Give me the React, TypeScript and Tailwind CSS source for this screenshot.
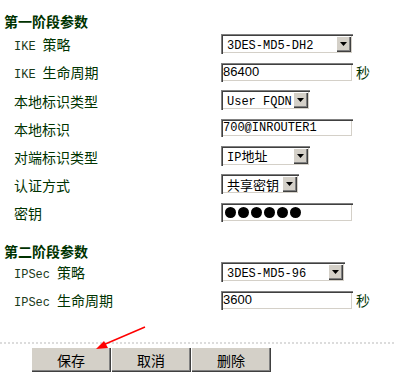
import React from "react";

const green = "text-[#003300]";
const cjk = "font-['Noto_Sans_CJK_SC',sans-serif]";
const mono = "font-['Liberation_Mono','Noto_Sans_CJK_SC',monospace]";
const sunken =
  "bg-white shadow-[inset_1px_1px_#808080,inset_2px_2px_#404040,inset_-1px_-1px_#ffffff,inset_-2px_-2px_#d4d0c8]";

const Label = ({ en, zh }: { en?: string; zh: string }) => (
  <div className={`w-[221px] pl-[14px] leading-[18px] pt-[2px] ${green}`}>
    {en && <span className={`${mono} text-[12px] mr-[7px] text-[#1a3a1a]`}>{en}</span>}
    <span className={`${cjk} text-[14px]`}>{zh}</span>
  </div>
);

const Select = ({ width, children }: { width: string; children: React.ReactNode }) => (
  <div className={`${width} h-[20px] ${sunken} flex items-center justify-between pl-[6px] pr-[2px]`}>
    <div className="text-black leading-[16px]">{children}</div>
    <div className="w-[15px] h-[16px] bg-[#d4d0c8] shadow-[inset_1px_1px_#ffffff,inset_-1px_-1px_#404040,inset_-2px_-2px_#808080] flex items-center justify-center">
      <svg width="7" height="4" viewBox="0 0 7 4">
        <path d="M0 0h7L3.5 4z" fill="#000" />
      </svg>
    </div>
  </div>
);

const TextBox = ({ value, height = "h-[19px]", serif }: { value: string; height?: string; serif?: boolean }) => (
  <div
    className={`w-[132px] ${height} ${sunken} flex items-center pl-[2px] text-black ${
      serif ? `${mono} text-[12px]` : "font-['Liberation_Sans',sans-serif] text-[13px]"
    }`}
  >
    {value}
  </div>
);

const Sec = () => <span className={`${cjk} text-[14px] ml-[3px] ${green}`}>秒</span>;

const Row = ({ children }: { children: React.ReactNode }) => (
  <div className="h-[28px] flex items-center">{children}</div>
);

export default function App() {
  return (
    <div className="relative w-[394px] h-[375px] overflow-hidden bg-white">
      <div className={`h-[30px] pt-[13px] pl-[4px] ${cjk} font-bold text-[14px] leading-[16px] ${green}`}>
        第一阶段参数
      </div>

      <Row>
        <Label en="IKE" zh="策略" />
        <Select width="w-[132px]">
          <span className={`${mono} text-[12px]`}>3DES-MD5-DH2</span>
        </Select>
      </Row>
      <Row>
        <Label en="IKE" zh="生命周期" />
        <TextBox value="86400" />
        <Sec />
      </Row>
      <Row>
        <Label zh="本地标识类型" />
        <Select width="w-[89px]">
          <span className={`${mono} text-[12px]`}>User FQDN</span>
        </Select>
      </Row>
      <Row>
        <Label zh="本地标识" />
        <TextBox value="700@INROUTER1" height="h-[18px]" serif />
      </Row>
      <Row>
        <Label zh="对端标识类型" />
        <Select width="w-[89px]">
          <span className={`${mono} text-[12px]`}>IP</span>
          <span className={`${cjk} text-[13px]`}>地址</span>
        </Select>
      </Row>
      <Row>
        <Label zh="认证方式" />
        <Select width="w-[78px]">
          <span className={`${cjk} text-[13px]`}>共享密钥</span>
        </Select>
      </Row>
      <Row>
        <Label zh="密钥" />
        <div className={`w-[132px] h-[19px] ${sunken} flex items-center gap-[2px] pl-[4px]`}>
          {[0, 1, 2, 3, 4, 5].map((i) => (
            <span key={i} className="w-[11px] h-[11px] rounded-full bg-black" />
          ))}
        </div>
      </Row>

      <div className={`h-[32px] pt-[17px] pl-[4px] ${cjk} font-bold text-[14px] leading-[16px] ${green}`}>
        第二阶段参数
      </div>

      <Row>
        <Label en="IPSec" zh="策略" />
        <Select width="w-[124px]">
          <span className={`${mono} text-[12px]`}>3DES-MD5-96</span>
        </Select>
      </Row>
      <Row>
        <Label en="IPSec" zh="生命周期" />
        <TextBox value="3600" />
        <Sec />
      </Row>

      <div className="mt-[28px] border-t-2 border-dotted border-[#dcdcdc]" />

      <div className="mt-[3px] pl-[31px] flex">
        {["保存", "取消", "删除"].map((t) => (
          <button
            key={t}
            className={`w-[80px] h-[25px] bg-[#d4d0c8] text-black ${cjk} text-[14px] leading-[16px] shadow-[inset_1px_1px_#ffffff,inset_-1px_-1px_#404040,inset_-2px_-2px_#808080]`}
          >
            {t}
          </button>
        ))}
      </div>

      <svg className="absolute left-0 top-0 pointer-events-none" width="394" height="375">
        <line x1="145" y1="327" x2="103" y2="345" stroke="#ff0000" strokeWidth="1.5" />
        <path d="M96 349 L104 341 L108 348 Z" fill="#ff0000" />
      </svg>
    </div>
  );
}
